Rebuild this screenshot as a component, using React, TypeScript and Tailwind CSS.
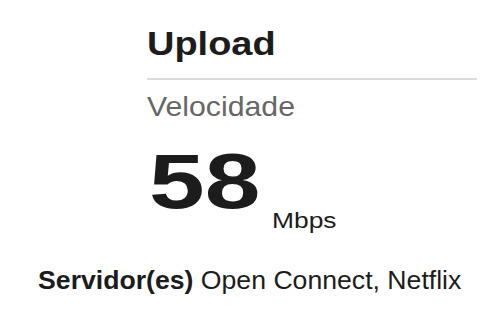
export default function App() {
  return (
    <div className="w-[500px] h-[313px] bg-white overflow-hidden font-['Liberation_Sans',Arial,sans-serif] text-[#1c1c1c]">
      <div className="pl-[147px] pt-[27px] flex flex-col">
        <h1 className="text-[33px] leading-none font-bold origin-left scale-x-[1.15]">Upload</h1>
        <div className="mt-[18px] h-[2px] w-[330px] bg-[#dcdcdc]" />
        <div className="mt-[13px] text-[28px] leading-none text-[#666666] origin-left scale-x-[1.08]">
          Velocidade
        </div>
        <div className="mt-[22px] flex items-end">
          <span className="ml-[2px] text-[77px] leading-none font-bold origin-left scale-x-[1.3]">58</span>
          <span className="ml-[37px] mb-[-12px] text-[22px] leading-none origin-left scale-x-[1.2]">Mbps</span>
        </div>
      </div>
      <div className="mt-[48px] flex justify-center">
        <p className="text-[25px] leading-none origin-center scale-x-[1.065]">
          <span className="font-bold">Servidor(es)</span> Open Connect, Netflix
        </p>
      </div>
    </div>
  );
}
